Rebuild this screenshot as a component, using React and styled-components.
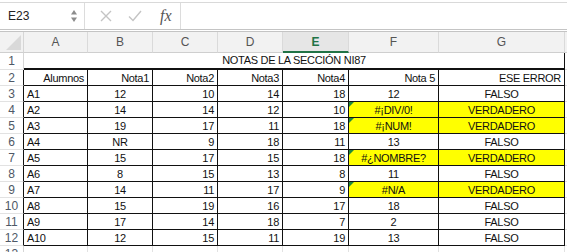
import React from 'react';
import styled, {createGlobalStyle} from 'styled-components';

const GlobalStyle = createGlobalStyle`
  html, body {
    margin: 0;
    padding: 0;
    background: #fff;
    overflow: hidden;
  }
  body {
    font-family: "Liberation Sans", Arial, sans-serif;
  }
`;

const COLS = ['A', 'B', 'C', 'D', 'E', 'F', 'G'];
const ALIGN = ['left', 'center', 'right', 'right', 'right', 'center', 'center'];

const rows = [
    ['A1', 12, 10, 14, 18, 12, 'FALSO'],
    ['A2', 14, 14, 12, 10, '#¡DIV/0!', 'VERDADERO'],
    ['A3', 19, 17, 11, 18, '#¡NUM!', 'VERDADERO'],
    ['A4', 'NR', 9, 18, 11, 13, 'FALSO'],
    ['A5', 15, 17, 15, 18, '#¿NOMBRE?', 'VERDADERO'],
    ['A6', 8, 15, 13, 8, 11, 'FALSO'],
    ['A7', 14, 11, 17, 9, '#N/A', 'VERDADERO'],
    ['A8', 15, 19, 16, 17, 18, 'FALSO'],
    ['A9', 17, 14, 18, 7, 2, 'FALSO'],
    ['A10', 12, 15, 11, 19, 13, 'FALSO'],
];

const Page = styled.div`
  width: 567px;
  height: 252px;
  overflow: hidden;
`;

const FormulaBar = styled.div`
  display: flex;
  margin-top: 2px;
  height: 26px;
  border-top: 1px solid #d9d9d9;
  border-bottom: 3px double #c4c4c4;
`;

const NameBox = styled.div`
  width: 85px;
  box-sizing: border-box;
  display: flex;
  align-items: center;
  justify-content: space-between;
  padding: 0 6px 0 8px;
  border-right: 1px solid #dcdcdc;
  font-size: 12px;
  color: #222;
`;

const Tools = styled.div`
  width: 95px;
  display: flex;
  align-items: center;
  padding-left: 15px;
  gap: 16px;
  box-sizing: border-box;
`;

const Fx = styled.span`
  font-family: "Liberation Serif", "Times New Roman", serif;
  font-style: italic;
  font-size: 16px;
  color: #555;
  margin-left: 2px;
`;

const Input = styled.div`
  flex: 1;
  border-left: 1px solid #dcdcdc;
`;

const Sheet = styled.div`
  display: grid;
  grid-template-columns: 24px 64px 65px 65px 65px 66px 90px 126px 20px;
  grid-template-rows: 21px 17px repeat(11, 16px) 16px;
  font-size: 11px;
  letter-spacing: -0.3px;
  color: #111;
`;

const Corner = styled.div`
  background: #f2f2f2;
  border-right: 1px solid #d6d6d6;
  border-bottom: 1px solid #cfcfcf;
  position: relative;

  &::after {
    content: '';
    position: absolute;
    right: 2px;
    bottom: 2px;
    width: 15px;
    height: 15px;
    background: #d9d9d9;
    clip-path: polygon(100% 0, 100% 100%, 0 100%);
  }
`;

const ColHead = styled.div`
  box-sizing: border-box;
  background: ${p => (p.$active ? '#e6e6e6' : '#f2f2f2')};
  border-right: 1px solid #dadada;
  border-bottom: ${p => (p.$active ? '2px solid #217346' : '1px solid #cfcfcf')};
  display: flex;
  align-items: center;
  justify-content: center;
  font-size: 12px;
  letter-spacing: 0;
  color: ${p => (p.$active ? '#217346' : '#555')};
  font-weight: ${p => (p.$active ? 700 : 400)};
`;

const RowHead = styled.div`
  box-sizing: border-box;
  border-right: 1px solid ${p => (p.$boxed ? '#111' : '#d6d6d6')};
  border-bottom: 1px solid #e2e2e2;
  font-size: 12px;
  letter-spacing: 0;
  color: #4e5866;
  text-align: center;
  line-height: 16px;
`;

const Cell = styled.div`
  box-sizing: border-box;
  position: relative;
  padding: 0 3px;
  white-space: nowrap;
  line-height: 16px;
  text-align: ${p => p.$align || 'left'};
  background: ${p => (p.$fill ? '#ffff00' : 'transparent')};
  border-right: 1px solid ${p => (p.$boxed ? '#111' : '#e2e2e2')};
  border-bottom: ${p => (p.$thick ? '2px solid #111' : `1px solid ${p.$boxed ? '#111' : '#e2e2e2'}`)};

  &::before {
    content: '';
    display: ${p => (p.$flag ? 'block' : 'none')};
    position: absolute;
    left: 0;
    top: 0;
    width: 5px;
    height: 5px;
    background: #1e8a3c;
    clip-path: polygon(0 0, 100% 0, 0 100%);
  }
`;

const Title = styled(Cell)`
  grid-column: span 7;
  text-align: center;
  line-height: 15px;
`;

const Stepper = () => (
    <svg width="8" height="16" viewBox="0 0 8 16">
        <path d="M4 2 L7 6.5 L1 6.5 Z" fill="#8c8c8c"/>
        <path d="M4 14 L7 9.5 L1 9.5 Z" fill="#8c8c8c"/>
    </svg>
);

const Cross = () => (
    <svg width="12" height="12" viewBox="0 0 12 12">
        <path d="M1 1 L11 11 M11 1 L1 11" stroke="#c4c4c4" strokeWidth="1.4" fill="none"/>
    </svg>
);

const Check = () => (
    <svg width="14" height="12" viewBox="0 0 14 12">
        <path d="M1 6.5 L5 10.5 L13 1" stroke="#c4c4c4" strokeWidth="1.4" fill="none"/>
    </svg>
);

const isError = v => typeof v === 'string' && v.startsWith('#');

const App = () => (
    <Page>
        <GlobalStyle/>
        <FormulaBar>
            <NameBox>
                <span>E23</span>
                <Stepper/>
            </NameBox>
            <Tools>
                <Cross/>
                <Check/>
                <Fx>fx</Fx>
            </Tools>
            <Input/>
        </FormulaBar>
        <Sheet>
            <Corner/>
            {COLS.map(c => (
                <ColHead key={c} $active={c === 'E'}>{c}</ColHead>
            ))}
            <ColHead/>

            <RowHead>1</RowHead>
            <Title $boxed $thick>NOTAS DE LA SECCIÓN NI87</Title>
            <Cell/>

            <RowHead $boxed>2</RowHead>
            {['Alumnos', 'Nota1', 'Nota2', 'Nota3', 'Nota4', 'Nota 5', 'ESE ERROR'].map(h => (
                <Cell key={h} $boxed $align="right">{h}</Cell>
            ))}
            <Cell/>

            {rows.map((r, i) => (
                <React.Fragment key={r[0]}>
                    <RowHead $boxed>{i + 3}</RowHead>
                    {r.map((v, j) => (
                        <Cell
                            key={j}
                            $boxed
                            $align={ALIGN[j]}
                            $fill={j >= 5 && isError(r[5])}
                            $flag={j === 5 && isError(v)}
                        >
                            {v}
                        </Cell>
                    ))}
                    <Cell/>
                </React.Fragment>
            ))}

            <RowHead>13</RowHead>
            {COLS.map(c => <Cell key={c}/>)}
            <Cell/>
        </Sheet>
    </Page>
);

export default App;
